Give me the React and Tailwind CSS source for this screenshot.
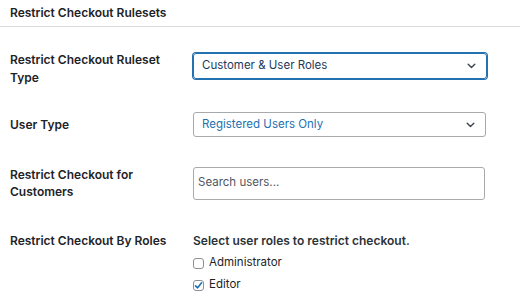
import React from 'react';

const Chevron = () => (
  <svg width="9" height="6" viewBox="0 0 9 6" className="shrink-0">
    <path d="M1.2 1.3 L4.5 4.5 L7.8 1.3" fill="none" stroke="#3c434a" strokeWidth="1.4" strokeLinecap="round" strokeLinejoin="round" />
  </svg>
);

const Checkbox = ({ checked }) => (
  <span className="w-[11px] h-[11px] rounded-[3px] border border-[#8c8f94] bg-white flex items-center justify-center shrink-0">
    {checked && (
      <svg width="9" height="9" viewBox="0 0 9 9">
        <path d="M1.5 4.8 L3.6 6.8 L7.6 1.8" fill="none" stroke="#2271b1" strokeWidth="1.6" strokeLinecap="round" strokeLinejoin="round" />
      </svg>
    )}
  </span>
);

export default function App() {
  return (
    <div className="w-[520px] h-[296px] bg-white text-[#1d2327] overflow-hidden" style={{ fontFamily: 'Inter, "Liberation Sans", sans-serif' }}>
      <div className="h-[27px] px-[10px] flex items-center border-b border-[#dcdcde] text-[12px] font-semibold">
        Restrict Checkout Rulesets
      </div>

      <div className="px-[10px]">
        {/* ruleset type */}
        <div className="flex items-start mt-[24px]">
          <div className="w-[183px] text-[12px] font-semibold leading-[18px]">Restrict Checkout Ruleset<br />Type</div>
          <div className="mt-[2px] w-[294px] h-[26px] rounded-[3px] border border-[#2271b1] shadow-[0_0_0_1px_#2271b1] flex items-center justify-between pl-[8px] pr-[10px] text-[11.5px] text-[#1e3a5c]">
            <span>Customer &amp; User Roles</span>
            <Chevron />
          </div>
        </div>

        {/* user type */}
        <div className="flex items-center mt-[25px]">
          <div className="w-[183px] text-[12px] font-semibold leading-[18px]">User Type</div>
          <div className="w-[293px] h-[25px] rounded-[3px] border border-[#a7aaad] flex items-center justify-between pl-[8px] pr-[10px] text-[11.5px] text-[#2271b1]">
            <span>Registered Users Only</span>
            <Chevron />
          </div>
        </div>

        {/* customers */}
        <div className="flex items-center mt-[29px]">
          <div className="w-[183px] text-[12px] font-semibold leading-[17px]">Restrict Checkout for<br />Customers</div>
          <div className="w-[292px] h-[33px] rounded-[3px] border border-[#a7aaad] flex items-center pl-[4px] text-[11.5px] text-[#50575e]">
            Search users...
          </div>
        </div>

        {/* roles */}
        <div className="flex items-start mt-[32px]">
          <div className="w-[183px] text-[12px] font-semibold leading-[18px]">Restrict Checkout By Roles</div>
          <div className="flex flex-col">
            <div className="text-[12px] font-semibold leading-[18px] text-[#2c3338]">Select user roles to restrict checkout.</div>
            <div className="flex items-center gap-[5px] h-[22px] mt-[2px] text-[11.5px]">
              <Checkbox />
              <span>Administrator</span>
            </div>
            <div className="flex items-center gap-[5px] h-[22px] text-[11.5px]">
              <Checkbox checked />
              <span>Editor</span>
            </div>
          </div>
        </div>
      </div>
    </div>
  );
}
